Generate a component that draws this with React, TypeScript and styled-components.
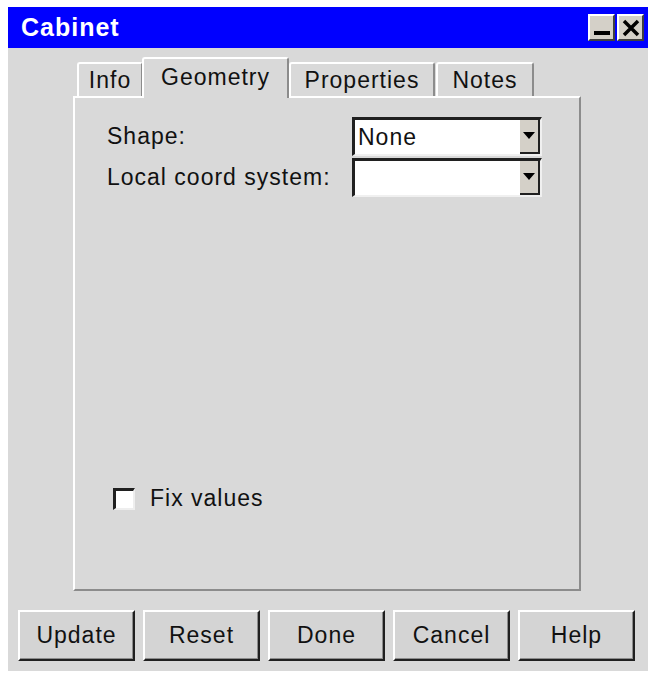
import React from 'react';
import styled, { createGlobalStyle } from 'styled-components';

const GlobalStyle = createGlobalStyle`
  html, body {
    margin: 0;
    padding: 0;
    background: #ffffff;
  }
  body {
    font-family: "Liberation Sans", Arial, sans-serif;
  }
`;

const Window = styled.div`
  margin: 7px 2px 0 8px;
  width: 640px;
  background: #d9d9d9;
  display: flex;
  flex-direction: column;
`;

const TitleBar = styled.div`
  height: 41px;
  background: #0000ff;
  display: flex;
  align-items: center;
  justify-content: space-between;
  padding: 0 4px 0 13px;
`;

const Title = styled.span`
  color: #ffffff;
  font-weight: bold;
  font-size: 25px;
  letter-spacing: 1px;
`;

const TitleButtons = styled.div`
  display: flex;
  gap: 2px;
`;

const TitleButton = styled.div`
  width: 27px;
  height: 27px;
  box-sizing: border-box;
  background: #d4d0c8;
  border: 2px solid;
  border-color: #ffffff #404040 #404040 #ffffff;
  display: flex;
  align-items: center;
  justify-content: center;
`;

const Body = styled.div`
  padding: 8px 10px 10px 10px;
  display: flex;
  flex-direction: column;
`;

const TabStrip = styled.div`
  display: flex;
  align-items: flex-end;
  padding-left: 58px;
  height: 40px;
  position: relative;
  z-index: 1;
`;

const Tab = styled.div<{ active?: boolean; w: number }>`
  width: ${p => p.w}px;
  height: ${p => (p.active ? 41 : 34)}px;
  box-sizing: border-box;
  background: #d9d9d9;
  border: 2px solid;
  border-color: #ffffff #8c8c8c transparent #ffffff;
  border-bottom: none;
  border-radius: 3px 3px 0 0;
  margin-bottom: ${p => (p.active ? -2 : 0)}px;
  margin-left: ${p => (p.active ? -1 : 1)}px;
  margin-right: ${p => (p.active ? -1 : 0)}px;
  font-size: 23px;
  letter-spacing: 1px;
  color: #111;
  display: flex;
  align-items: ${p => (p.active ? 'flex-start' : 'center')};
  padding-top: ${p => (p.active ? 5 : 0)}px;
  justify-content: center;
`;

const Panel = styled.div`
  margin-left: 55px;
  width: 508px;
  height: 495px;
  box-sizing: border-box;
  border: 2px solid;
  border-color: #ffffff #8c8c8c #8c8c8c #ffffff;
  padding: 19px 0 0 32px;
  display: flex;
  flex-direction: column;
  justify-content: space-between;
`;

const FieldGrid = styled.div`
  display: grid;
  grid-template-columns: 245px 190px;
  row-gap: 2px;
  align-items: center;
`;

const Label = styled.span`
  font-size: 23px;
  letter-spacing: 1px;
  color: #111;
`;

const Select = styled.div`
  height: 39px;
  box-sizing: border-box;
  background: #ffffff;
  border-top: 3px solid #202020;
  border-left: 3px solid #202020;
  border-right: 2px solid #f0f0f0;
  border-bottom: 2px solid #f0f0f0;
  display: flex;
  align-items: stretch;
`;

const SelectText = styled.span`
  flex: 1;
  font-size: 23px;
  letter-spacing: 1px;
  color: #111;
  padding-left: 3px;
  display: flex;
  align-items: center;
`;

const Arrow = styled.div`
  width: 18px;
  background: #d4d0c8;
  border-right: 2px solid #202020;
  border-bottom: 2px solid #202020;
  display: flex;
  align-items: center;
  justify-content: center;
`;

const CheckRow = styled.div`
  display: flex;
  align-items: center;
  gap: 15px;
  margin: 0 0 77px 6px;
`;

const CheckBox = styled.div`
  width: 22px;
  height: 22px;
  box-sizing: border-box;
  background: #ffffff;
  border-top: 3px solid #202020;
  border-left: 3px solid #202020;
  border-right: 2px solid #eeeeee;
  border-bottom: 2px solid #eeeeee;
`;

const ButtonRow = styled.div`
  display: flex;
  gap: 8px;
  margin-top: 19px;
`;

const Button = styled.div`
  width: 117px;
  height: 51px;
  box-sizing: border-box;
  background: #d4d4d4;
  border: 2px solid;
  border-color: #ffffff #202020 #202020 #ffffff;
  box-shadow: inset -1px -1px 0 #8c8c8c;
  font-size: 23px;
  letter-spacing: 1px;
  color: #111;
  display: flex;
  align-items: center;
  justify-content: center;
`;

const ArrowIcon = () => (
  <svg width="12" height="8" viewBox="0 0 12 8">
    <polygon points="0,0 12,0 6,7" fill="#000" />
  </svg>
);

const tabs = [
  { name: 'Info', w: 66 },
  { name: 'Geometry', w: 147 },
  { name: 'Properties', w: 146 },
  { name: 'Notes', w: 98 },
];

const buttons = ['Update', 'Reset', 'Done', 'Cancel', 'Help'];

export default function App() {
  return (
    <>
      <GlobalStyle />
      <Window>
        <TitleBar>
          <Title>Cabinet</Title>
          <TitleButtons>
            <TitleButton>
              <svg width="18" height="18" viewBox="0 0 18 18">
                <rect x="1" y="12" width="16" height="4" fill="#000" />
              </svg>
            </TitleButton>
            <TitleButton>
              <svg width="18" height="18" viewBox="0 0 18 18">
                <path d="M2 2 L16 16 M16 2 L2 16" stroke="#000" strokeWidth="3.5" />
              </svg>
            </TitleButton>
          </TitleButtons>
        </TitleBar>
        <Body>
          <TabStrip>
            {tabs.map(t => (
              <Tab key={t.name} w={t.w} active={t.name === 'Geometry'}>
                {t.name}
              </Tab>
            ))}
          </TabStrip>
          <Panel>
            <FieldGrid>
              <Label>Shape:</Label>
              <Select>
                <SelectText>None</SelectText>
                <Arrow><ArrowIcon /></Arrow>
              </Select>
              <Label>Local coord system:</Label>
              <Select>
                <SelectText />
                <Arrow><ArrowIcon /></Arrow>
              </Select>
            </FieldGrid>
            <CheckRow>
              <CheckBox />
              <Label>Fix values</Label>
            </CheckRow>
          </Panel>
          <ButtonRow>
            {buttons.map(b => (
              <Button key={b}>{b}</Button>
            ))}
          </ButtonRow>
        </Body>
      </Window>
    </>
  );
}
